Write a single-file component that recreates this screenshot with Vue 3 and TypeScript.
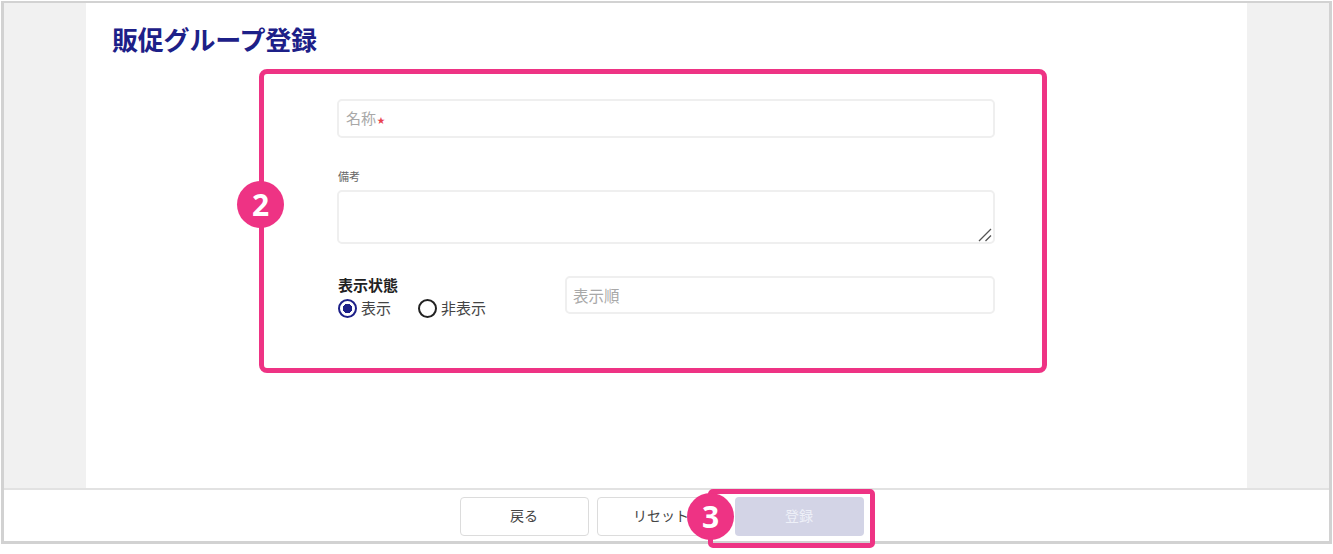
<script setup lang="ts">
import { ref } from "vue";

const name = ref("");
const note = ref("");
const order = ref("");
const visible = ref("show");

const visibleOptions = [
  { value: "show", label: "表示" },
  { value: "hide", label: "非表示" },
];
</script>

<template>
  <div class="page">
    <div class="frame">
      <div class="body">
        <main class="content">
          <h1 class="title">販促グループ登録</h1>
          <form class="form" @submit.prevent>
            <label class="field field--name">
              <input v-model="name" class="input" type="text" />
              <span class="float-label">名称<em class="required">★</em></span>
            </label>

            <label class="note">
              <span class="note__label">備考</span>
              <span class="note__box">
                <textarea v-model="note" class="textarea"></textarea>
                <svg class="note__grip" width="14" height="14" viewBox="0 0 14 14" aria-hidden="true">
                  <path d="M1 13 13 1M7.5 13 13 7.500" fill="none" stroke="#555" stroke-width="1.300" />
                </svg>
              </span>
            </label>

            <div class="bottom-row">
              <div class="status">
                <div class="status__label">表示状態</div>
                <div class="status__options">
                  <label v-for="opt in visibleOptions" :key="opt.value" class="radio">
                    <input v-model="visible" class="radio__input" type="radio" :value="opt.value" />
                    <span>{{ opt.label }}</span>
                  </label>
                </div>
              </div>
              <input v-model="order" class="input input--order" type="text" placeholder="表示順" />
            </div>
          </form>
        </main>
      </div>
      <footer class="footer">
        <button class="btn" type="button">戻る</button>
        <button class="btn" type="button">リセット</button>
        <button class="btn btn--primary" type="button" disabled>登録</button>
      </footer>
    </div>

    <div class="callout callout--form"></div>
    <div class="badge badge--form">2</div>
    <div class="callout callout--submit"></div>
    <div class="badge badge--submit">3</div>
  </div>
</template>

<style>
html,
body {
  margin: 0;
  background: #fff;
}
</style>

<style scoped>
.page {
  position: relative;
  width: 1333px;
  height: 554px;
  overflow: hidden;
  background: #fff;
  font-family: "Noto Sans CJK JP", "Noto Sans", sans-serif;
  color: #333;
}

.frame {
  box-sizing: border-box;
  display: flex;
  flex-direction: column;
  width: 1331px;
  height: 543px;
  margin: 1px 0 0 1px;
  border: 3px solid #d2d2d2;
  border-top-width: 2px;
}

.body {
  flex: 1;
  display: flex;
  justify-content: center;
  min-height: 0;
  background: #f1f1f1;
}

.content {
  box-sizing: border-box;
  display: flex;
  flex-direction: column;
  width: 1161px;
  padding: 21px 26px 0;
  background: #fff;
}

.title {
  margin: 0;
  color: #1d2088;
  font-size: 26px;
  font-weight: 700;
  line-height: 30px;
  letter-spacing: -0.2px;
}

.form {
  align-self: flex-start;
  width: 658px;
  margin: 45px 0 0 225px;
}

.field {
  position: relative;
  display: block;
}

.input,
.textarea {
  box-sizing: border-box;
  display: block;
  width: 100%;
  border: 2px solid #efefef;
  border-radius: 5px;
  background: #fff;
  outline: none;
  font: inherit;
  font-size: 14px;
  color: #333;
}

.input {
  height: 39px;
  padding: 0 7px;
}

.input::placeholder {
  color: #a8a8a8;
}

.float-label {
  position: absolute;
  left: 9px;
  top: 9px;
  color: #a8a8a8;
  font-size: 15px;
  line-height: 20px;
  pointer-events: none;
}

.required {
  position: relative;
  top: -1px;
  margin-left: 1px;
  color: #e8414f;
  font-style: normal;
  font-size: 8px;
}

.note {
  display: block;
  margin-top: 31px;
}

.note__label {
  display: block;
  padding-left: 1px;
  color: #666;
  font-size: 11px;
  line-height: 14px;
  margin-bottom: 7px;
}

.note__box {
  position: relative;
  display: block;
}

.textarea {
  height: 54px;
  padding: 6px 7px;
  resize: none;
}

.note__grip {
  position: absolute;
  right: 3px;
  bottom: 2px;
  pointer-events: none;
}

.bottom-row {
  display: flex;
  align-items: flex-start;
  gap: 0;
  margin-top: 32px;
}

.status {
  width: 228px;
  flex: none;
}

.status__label {
  padding-left: 1px;
  color: #222;
  font-size: 15px;
  font-weight: 700;
  line-height: 18px;
}

.status__options {
  display: flex;
  gap: 27px;
  margin-top: 4px;
  padding-left: 1px;
}

.radio {
  display: flex;
  align-items: center;
  gap: 4px;
  color: #444;
  font-size: 15px;
  line-height: 20px;
}

.radio__input {
  appearance: none;
  box-sizing: border-box;
  width: 19px;
  height: 19px;
  margin: 0;
  border: 2px solid #222;
  border-radius: 50%;
  background: #fff;
}

.radio__input:checked {
  border-color: #1d2088;
  background: radial-gradient(circle, #1d2088 0 4.500px, #fff 5px);
}

.input--order {
  flex: 1;
  width: auto;
  min-width: 0;
  height: 38px;
  padding-left: 6px;
  font-size: 15.500px;
}

.footer {
  flex: none;
  box-sizing: border-box;
  display: flex;
  justify-content: center;
  gap: 8px;
  height: 53px;
  padding: 7px 10px 0 0;
  border-top: 2px solid #e2e2e2;
  background: #fff;
}

.btn {
  box-sizing: border-box;
  width: 129px;
  height: 39px;
  padding: 0 0 3px;
  border: 1px solid #dcdcdc;
  border-radius: 4px;
  background: #fff;
  color: #444;
  font: inherit;
  font-size: 14px;
}

.btn--primary {
  margin-left: 1px;
  border: none;
  background: #d3d4e6;
  color: #eef0f8;
}

.callout {
  position: absolute;
  box-sizing: border-box;
  border: 5px solid #ee3384;
  border-radius: 8px;
  pointer-events: none;
}

.callout--form {
  left: 259px;
  top: 69px;
  width: 788px;
  height: 304px;
}

.callout--submit {
  left: 708px;
  top: 489px;
  width: 167px;
  height: 59px;
  border-radius: 5px;
}

.badge {
  position: absolute;
  display: flex;
  align-items: center;
  justify-content: center;
  width: 47px;
  height: 47px;
  border-radius: 50%;
  background: #ee3384;
  color: #fff;
  font-family: "Open Sans", "Noto Sans", sans-serif;
  font-size: 30px;
  font-weight: 700;
  line-height: 1;
}

.badge--form {
  left: 237px;
  top: 181px;
}

.badge--submit {
  left: 687px;
  top: 493px;
}
</style>
